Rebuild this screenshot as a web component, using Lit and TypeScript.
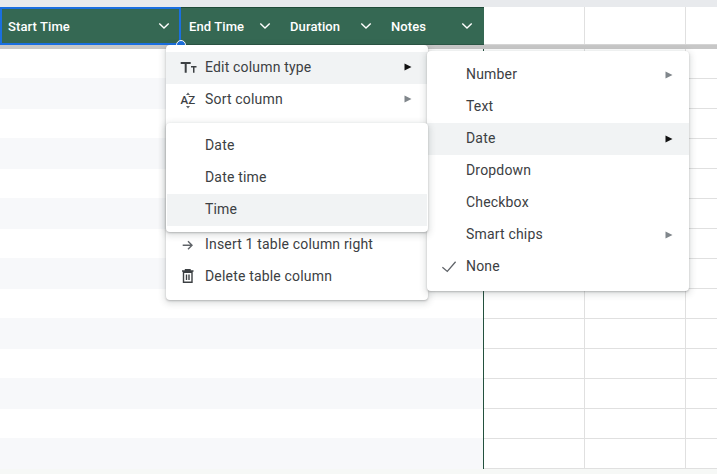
import { LitElement, html, css, svg } from 'lit'
import { customElement } from 'lit/decorators.js'

const chevron = html`<svg class="chev" width="12" height="8" viewBox="0 0 12 8" fill="none"><path d="M1.300 1.400 6 6.100l4.700-4.700" stroke="#fff" stroke-width="1.400"/></svg>`
const arrow = (dark: boolean) => html`<svg class="arrow" width="8" height="8" viewBox="0 0 8 8"><path d="M0.500 0.500 7.500 4 0.500 7.500z" fill="${dark ? '#111' : '#80868b'}"/></svg>`

const icons = {
  type: svg`<path d="M2.700 5h10v2H8.700v8.700h-2V7h-4zM13 9h5.500v1.400h-2V15.700h-1.500V10.400H13z" fill="#3c4043"/>`,
  sort: svg`<path d="M10 3.500 12 6H8zM10 19.500 8 17h4z" fill="#5f6368"/><text x="2.500" y="15" font-size="11.500" font-weight="500" font-family="Roboto" fill="#3c4043">A</text><text x="10.300" y="15" font-size="11.500" font-weight="500" font-family="Roboto" fill="#3c4043">Z</text>`,
  right: svg`<path d="M4.700 11.300h9M10 7.300l4 4-4 4" fill="none" stroke="#5f6368" stroke-width="1.400"/>`,
  trash: svg`<path d="M5.500 6.200h8.500V16.300H5.500zM4 5h11.500M7.500 5V3.600h4.500V5M8.500 8.500v5.500M11 8.500v5.500" fill="none" stroke="#3c4043" stroke-width="1.400"/>`,
  check: svg`<path d="M3.400 11.200 8.300 15.400 16.600 5.800" fill="none" stroke="#5f6368" stroke-width="1.300"/>`,
}

const icon = (name: keyof typeof icons) => html`<svg class="ico" width="20" height="20" viewBox="0 0 20 20">${icons[name]}</svg>`

interface Item {
  label: string
  icon?: keyof typeof icons
  sub?: boolean
  hover?: boolean
  dark?: boolean
}

const mainTop: Item[] = [
  { label: 'Edit column type', icon: 'type', sub: true, hover: true, dark: true },
  { label: 'Sort column', icon: 'sort', sub: true },
]
const mainBottom: Item[] = [
  { label: 'Insert 1 table column right', icon: 'right' },
  { label: 'Delete table column', icon: 'trash' },
]
const dateItems: Item[] = [
  { label: 'Date' },
  { label: 'Date time' },
  { label: 'Time', hover: true },
]
const typeItems: Item[] = [
  { label: 'Number', sub: true },
  { label: 'Text' },
  { label: 'Date', sub: true, hover: true, dark: true },
  { label: 'Dropdown' },
  { label: 'Checkbox' },
  { label: 'Smart chips', sub: true },
  { label: 'None', icon: 'check' },
]

@customElement('app-root')
export class AppRoot extends LitElement {
  static styles = css`
    :host {
      display: block;
      position: relative;
      width: 717px;
      height: 474px;
      overflow: hidden;
      background: #fff;
      font-family: Roboto, sans-serif;
    }
    .topbar {
      height: 7px;
      background: #e8eaed;
    }
    .head {
      display: flex;
      height: 38px;
    }
    .cols {
      display: flex;
      flex: none;
      width: 484px;
      background: #356853;
      border-top: 1px solid #1f4b39;
      border-bottom: 1px solid #2a5544;
      box-sizing: border-box;
    }
    .col {
      display: flex;
      align-items: center;
      justify-content: space-between;
      box-sizing: border-box;
      width: 101px;
      padding: 0 11px 0 8px;
      color: #fff;
      font-size: 13px;
      font-weight: 500;
      letter-spacing: 0.1px;
    }
    .col.first {
      width: 181px;
      margin-top: -1px;
      margin-bottom: -1px;
      padding-left: 6px;
      padding-right: 9px;
      border: 2px solid #1a6fe0;
    }
    .chev { flex: none; }
    .freeze {
      height: 4px;
      background: #c7c7c7;
    }
    .heads-right {
      flex: 1;
      display: flex;
      border-bottom: 1px solid #d4d4d4;
    }
    .heads-right span {
      flex: none;
      width: 101px;
      box-sizing: border-box;
      border-right: 1px solid #e0e0e0;
    }
    .body {
      display: flex;
      height: 420px;
    }
    .table {
      flex: none;
      width: 484px;
      height: 420px;
      box-sizing: border-box;
      border-right: 1px solid #23513e;
      border-bottom: 1px solid #23513e;
    }
    .stripe {
      height: 29px;
      background: #fff;
    }
    .stripe:nth-child(even) {
      height: 31px;
      background: #f7f8fa;
    }
    .free { flex: 1; }
    .cell-row {
      display: flex;
      height: 30px;
      box-sizing: border-box;
      border-bottom: 1px solid #e0e0e0;
    }
    .cell-row span {
      flex: none;
      width: 101px;
      box-sizing: border-box;
      border-right: 1px solid #e0e0e0;
    }
    .foot {
      height: 5px;
      background: #f6f8f6;
    }
    .handle {
      position: absolute;
      left: 176px;
      top: 40px;
      width: 8px;
      height: 8px;
      background: #1a6fe0;
      border: 1px solid #fff;
      border-radius: 50%;
    }
    .menu {
      position: absolute;
      box-sizing: border-box;
      width: 262px;
      background: #fff;
      border-radius: 4px;
      box-shadow: 0 2px 6px 2px rgba(60, 64, 67, 0.15), 0 1px 2px rgba(60, 64, 67, 0.3);
    }
    .main { left: 166px; top: 45px; padding: 7px 0 7px; }
    .dates { left: 166px; top: 123px; padding: 7px 1px 6px; }
    .types { left: 427px; top: 51px; padding: 8px 0 8px; }
    .gap { height: 113px; }
    .item {
      display: flex;
      align-items: center;
      box-sizing: border-box;
      height: 32px;
      padding-left: 39px;
      padding-bottom: 2px;
      position: relative;
      color: #3c4043;
      font-size: 14px;
      letter-spacing: 0.18px;
    }
    .dates .item { padding-left: 38px; }
    .item.hover { background: #f1f3f4; }
    .ico {
      position: absolute;
      left: 12px;
      top: 5px;
    }
    .arrow {
      position: absolute;
      right: 16px;
      top: 11px;
    }
    .types .arrow { top: 12px; }
  `

  private renderItem (it: Item) {
    return html`
      <div class="item ${it.hover ? 'hover' : ''}">
        ${it.icon ? icon(it.icon) : ''}
        <span>${it.label}</span>
        ${it.sub ? arrow(!!it.dark) : ''}
      </div>
    `
  }

  render () {
    const rows = Array.from({ length: 14 })
    const cells = [0, 1, 2]
    return html`
      <div class="topbar"></div>
      <div class="head">
        <div class="cols">
          <div class="col first">Start Time ${chevron}</div>
          <div class="col">End Time ${chevron}</div>
          <div class="col">Duration ${chevron}</div>
          <div class="col">Notes ${chevron}</div>
        </div>
        <div class="heads-right">${cells.map(() => html`<span></span>`)}</div>
      </div>
      <div class="freeze"></div>
      <div class="body">
        <div class="table">${rows.map(() => html`<div class="stripe"></div>`)}</div>
        <div class="free">
          ${rows.map(() => html`<div class="cell-row">${cells.map(() => html`<span></span>`)}</div>`)}
        </div>
      </div>
      <div class="foot"></div>

      <div class="handle"></div>
      <div class="menu main">
        ${mainTop.map(i => this.renderItem(i))}
        <div class="gap"></div>
        ${mainBottom.map(i => this.renderItem(i))}
      </div>
      <div class="menu types">${typeItems.map(i => this.renderItem(i))}</div>
      <div class="menu dates">${dateItems.map(i => this.renderItem(i))}</div>
    `
  }
}
